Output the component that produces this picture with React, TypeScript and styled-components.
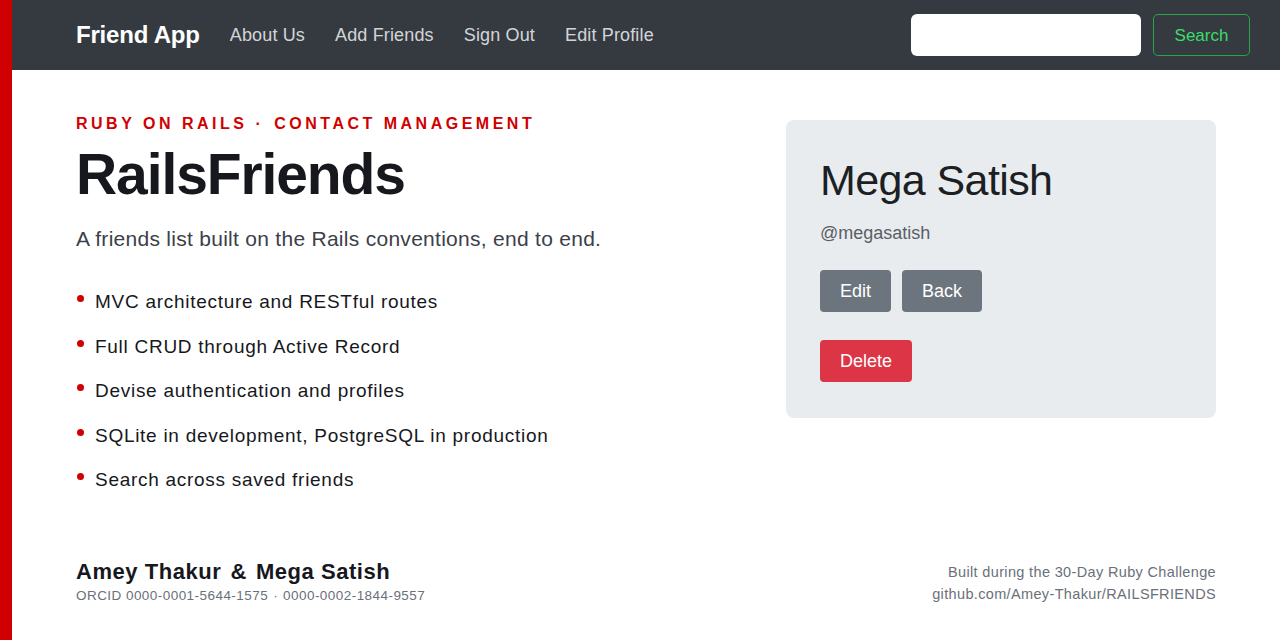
import React from "react";
import styled, { createGlobalStyle } from "styled-components";

const GlobalStyle = createGlobalStyle`
  * { box-sizing: border-box; }
  html, body { margin: 0; padding: 0; background: #ffffff; }
  body { font-family: "Liberation Sans", Arial, sans-serif; color: #16181d; }
`;

const Page = styled.div`
  min-height: 640px;
  border-left: 12px solid #d00000;
  display: flex;
  flex-direction: column;
`;

const NavBar = styled.nav`
  height: 70px;
  background: #343a40;
  display: flex;
  align-items: center;
  padding: 0 30px 0 64px;
`;

const Brand = styled.a`
  font-size: 24px;
  font-weight: 700;
  color: #ffffff;
  letter-spacing: -0.2px;
  margin-right: 30px;
  text-decoration: none;
`;

const NavLinks = styled.div`
  display: flex;
  gap: 30px;
  flex: 1;
`;

const NavLink = styled.a`
  font-size: 18px;
  color: rgba(255, 255, 255, 0.8);
  text-decoration: none;
  letter-spacing: 0.15px;
`;

const SearchForm = styled.form`
  display: flex;
  gap: 12px;
  align-items: center;
`;

const SearchInput = styled.input`
  width: 230px;
  height: 42px;
  border: none;
  border-radius: 6px;
  background: #ffffff;
`;

const SearchButton = styled.button`
  width: 97px;
  height: 42px;
  border: 1px solid #28a745;
  border-radius: 5px;
  background: transparent;
  color: #3ddc6b;
  font-family: "Liberation Sans", Arial, sans-serif;
  font-size: 17px;
  padding-top: 2px;
`;

const Container = styled.main`
  width: 1140px;
  margin: 0 auto;
  display: flex;
  flex-direction: column;
  flex: 1;
`;

const Hero = styled.section`
  display: grid;
  grid-template-columns: 1fr 430px;
  padding-top: 44px;
`;

const Intro = styled.div`
  display: flex;
  flex-direction: column;
`;

const Eyebrow = styled.div`
  font-size: 16px;
  font-weight: 700;
  color: #d00000;
  letter-spacing: 3.5px;
  line-height: 20px;
`;

const Dot = styled.span`
  margin: 0 10px 0 8px;
`;

const Title = styled.h1`
  margin: 8px 0 0;
  font-size: 57px;
  line-height: 64px;
  font-weight: 700;
  letter-spacing: -1.1px;
  color: #16181d;
`;

const Lead = styled.p`
  margin: 18px 0 0;
  font-size: 21px;
  line-height: 30px;
  color: #3c4048;
  letter-spacing: 0.28px;
`;

const Features = styled.ul`
  list-style: none;
  margin: 36px 0 0;
  padding: 0;
  display: flex;
  flex-direction: column;
  gap: 20.5px;
`;

const Feature = styled.li`
  position: relative;
  padding-left: 19px;
  font-size: 19px;
  line-height: 24px;
  color: #16181d;
  letter-spacing: 0.72px;

  &::before {
    content: "";
    position: absolute;
    left: 1px;
    top: 5px;
    width: 7px;
    height: 7px;
    border-radius: 50%;
    background: #d00000;
  }
`;

const Card = styled.div`
  align-self: start;
  margin-top: 6px;
  background: #e9ecef;
  border-radius: 8px;
  padding: 34px 34px 36px;
  height: 298px;
`;

const CardName = styled.h2`
  margin: 0;
  font-size: 43px;
  line-height: 52px;
  font-weight: 400;
  color: #1c1f24;
  letter-spacing: -0.6px;
`;

const Handle = styled.div`
  margin-top: 16px;
  font-size: 18px;
  line-height: 22px;
  color: #5a5f66;
`;

const ButtonRow = styled.div`
  display: flex;
  gap: 11px;
  margin-top: 26px;
`;

const ActionButton = styled.button<{ $tone: "secondary" | "danger" }>`
  height: 42px;
  padding: 0 20px;
  border: none;
  border-radius: 4px;
  font-family: "Liberation Sans", Arial, sans-serif;
  font-size: 18px;
  color: #ffffff;
  background: ${(p) => (p.$tone === "danger" ? "#dc3545" : "#6c757d")};
`;

const DeleteRow = styled.div`
  margin-top: 28px;
`;

const Footer = styled.footer`
  margin-top: auto;
  padding-bottom: 35px;
  display: flex;
  justify-content: space-between;
  align-items: flex-start;
`;

const Authors = styled.div`
  display: flex;
  flex-direction: column;
`;

const AuthorNames = styled.div`
  font-size: 22px;
  font-weight: 700;
  line-height: 26px;
  color: #16181d;
  letter-spacing: 0.55px;
`;

const Amp = styled.span`
  margin: 0 9px;
`;

const Orcid = styled.div`
  margin-top: 2px;
  font-size: 13.5px;
  line-height: 18px;
  color: #6b7079;
  letter-spacing: 0.45px;
`;

const OrcidDot = styled.span`
  margin: 0 5px;
`;

const Credits = styled.div`
  text-align: right;
  font-size: 14.5px;
  line-height: 22px;
  color: #6b7079;
  letter-spacing: 0.35px;
  padding-top: 2px;
`;

const features = [
  "MVC architecture and RESTful routes",
  "Full CRUD through Active Record",
  "Devise authentication and profiles",
  "SQLite in development, PostgreSQL in production",
  "Search across saved friends",
];

export default function App() {
  return (
    <>
      <GlobalStyle />
      <Page>
        <NavBar>
          <Brand href="#">Friend App</Brand>
          <NavLinks>
            <NavLink href="#">About Us</NavLink>
            <NavLink href="#">Add Friends</NavLink>
            <NavLink href="#">Sign Out</NavLink>
            <NavLink href="#">Edit Profile</NavLink>
          </NavLinks>
          <SearchForm onSubmit={(e) => e.preventDefault()}>
            <SearchInput type="search" aria-label="Search" />
            <SearchButton type="submit">Search</SearchButton>
          </SearchForm>
        </NavBar>
        <Container>
          <Hero>
            <Intro>
              <Eyebrow>
                RUBY ON RAILS<Dot>·</Dot>CONTACT MANAGEMENT
              </Eyebrow>
              <Title>RailsFriends</Title>
              <Lead>A friends list built on the Rails conventions, end to end.</Lead>
              <Features>
                {features.map((f) => (
                  <Feature key={f}>{f}</Feature>
                ))}
              </Features>
            </Intro>
            <Card>
              <CardName>Mega Satish</CardName>
              <Handle>@megasatish</Handle>
              <ButtonRow>
                <ActionButton $tone="secondary">Edit</ActionButton>
                <ActionButton $tone="secondary">Back</ActionButton>
              </ButtonRow>
              <DeleteRow>
                <ActionButton $tone="danger">Delete</ActionButton>
              </DeleteRow>
            </Card>
          </Hero>
          <Footer>
            <Authors>
              <AuthorNames>
                Amey Thakur<Amp>&amp;</Amp>Mega Satish
              </AuthorNames>
              <Orcid>
                ORCID 0000-0001-5644-1575<OrcidDot>·</OrcidDot>0000-0002-1844-9557
              </Orcid>
            </Authors>
            <Credits>
              Built during the 30-Day Ruby Challenge
              <br />
              github.com/Amey-Thakur/RAILSFRIENDS
            </Credits>
          </Footer>
        </Container>
      </Page>
    </>
  );
}
